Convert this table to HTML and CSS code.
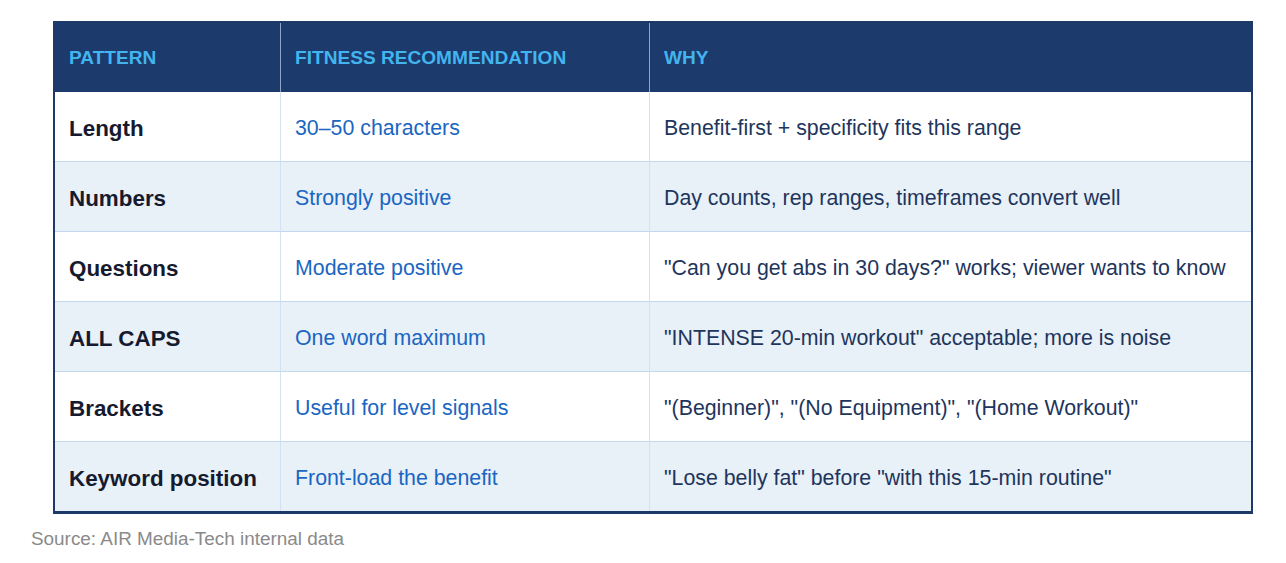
FILE: index.html
```html
<!DOCTYPE html>
<html lang="en">
<head>
<meta charset="utf-8">
<title>Fitness title patterns</title>
<link rel="stylesheet" href="styles.css">
</head>
<body>
<main class="page">
  <table class="patterns">
    <colgroup>
      <col class="c1">
      <col class="c2">
      <col class="c3">
    </colgroup>
    <thead>
      <tr>
        <th>PATTERN</th>
        <th>FITNESS RECOMMENDATION</th>
        <th>WHY</th>
      </tr>
    </thead>
    <tbody>
      <tr>
        <td class="pat">Length</td>
        <td class="rec">30–50 characters</td>
        <td class="why">Benefit-first + specificity fits this range</td>
      </tr>
      <tr class="alt">
        <td class="pat">Numbers</td>
        <td class="rec">Strongly positive</td>
        <td class="why">Day counts, rep ranges, timeframes convert well</td>
      </tr>
      <tr>
        <td class="pat">Questions</td>
        <td class="rec">Moderate positive</td>
        <td class="why">"Can you get abs in 30 days?" works; viewer wants to know</td>
      </tr>
      <tr class="alt">
        <td class="pat">ALL CAPS</td>
        <td class="rec">One word maximum</td>
        <td class="why">"INTENSE 20-min workout" acceptable; more is noise</td>
      </tr>
      <tr>
        <td class="pat">Brackets</td>
        <td class="rec">Useful for level signals</td>
        <td class="why">"(Beginner)", "(No Equipment)", "(Home Workout)"</td>
      </tr>
      <tr class="alt last">
        <td class="pat">Keyword position</td>
        <td class="rec">Front-load the benefit</td>
        <td class="why">"Lose belly fat" before "with this 15-min routine"</td>
      </tr>
    </tbody>
  </table>
  <p class="source">Source: AIR Media-Tech internal data</p>
</main>
</body>
</html>
```

FILE: styles.css
```css
* { box-sizing: border-box; }
html, body { margin: 0; padding: 0; background: #ffffff; }
body { font-family: "Liberation Sans", Arial, sans-serif; }

.page {
  padding: 21px 0 0 31px;
}

.patterns {
  margin-left: 22px;
  width: 1200px;
  table-layout: fixed;
  border-collapse: separate;
  border-spacing: 0;
  border: 2px solid #1c3968;
  border-bottom-width: 3px;
}

.c1 { width: 226px; }
.c2 { width: 369px; }
.c3 { width: 601px; }

.patterns th {
  background: #1c3a6b;
  color: #42b4ee;
  font-size: 19.1px;
  font-weight: bold;
  text-align: left;
  height: 69px;
  padding: 0 14px;
  border-right: 1px solid #8fa6c6;
  vertical-align: middle;
}
.patterns th:last-child { border-right: none; }

.patterns td {
  height: 70px;
  padding: 4px 14px 0 14px;
  font-size: 21.33px;
  vertical-align: middle;
  border-right: 1px solid #d3e2f2;
  border-bottom: 1px solid #c3d7ee;
  white-space: nowrap;
}
.patterns td:last-child { border-right: none; }
.patterns tr.last td { border-bottom: none; height: 69px; }

.patterns tr.alt td { background: #e8f0f8; }

.patterns td.pat { color: #161a2e; font-weight: bold; font-size: 22.4px; }
.rec { color: #1a66c2; }
.why { color: #1e355c; }

.source {
  margin: 14px 0 0 0;
  color: #8a8a8a;
  font-size: 18.9px;
}
```
